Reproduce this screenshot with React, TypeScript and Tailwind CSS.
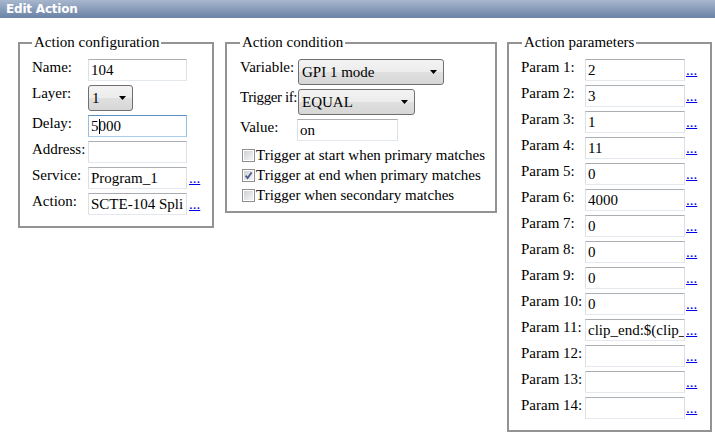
import React from "react";

function TextBox({ value, wide, focused }: { value?: string; wide?: boolean; focused?: boolean }) {
  const base =
    "h-[22px] shrink-0 overflow-hidden whitespace-nowrap border pl-[2px] leading-[20px]";
  const width = wide ? "w-[100px]" : "w-[99px]";
  const colors = focused
    ? "border-t-[#5a8fc0] border-x-[#95bde3] border-b-[#a9cdec]"
    : "border-t-[#abadb3] border-x-[#dbdfe6] border-b-[#e3e9ef]";
  return (
    <div className={`${base} ${width} ${colors}`}>
      {focused ? (
        <>
          5<span className="inline-block h-[15px] w-px -mr-px bg-black align-[-3px]" />000
        </>
      ) : (
        value
      )}
    </div>
  );
}

function Arrow() {
  return (
    <svg width="7" height="4" viewBox="0 0 7 4" className="shrink-0">
      <path d="M0 0H7L3.5 4Z" fill="#000" />
    </svg>
  );
}

function Select({ value, width }: { value: string; width: string }) {
  return (
    <div
      className={`flex h-[26px] shrink-0 items-center justify-between rounded-[3px] border border-[#707070] bg-[linear-gradient(#f3f3f3,#ececec_50%,#e0e0e0_50%,#d6d6d6)] pl-[3px] pr-[6px] leading-[17px] ${width}`}
    >
      <span className="whitespace-nowrap">{value}</span>
      <Arrow />
    </div>
  );
}

function Dots() {
  return (
    <span className="mb-[2px] ml-[2px] self-end leading-[17px] text-[#0000ee] underline">...</span>
  );
}

function Check({ checked }: { checked?: boolean }) {
  return (
    <span className="flex h-[13px] w-[13px] shrink-0 border border-[#8e8f8f] bg-white p-px">
      <span className="flex h-full w-full items-center justify-center bg-linear-to-br from-[#cfd1d4] to-[#f5f5f5]">
        {checked ? (
          <svg width="9" height="9" viewBox="0 0 9 9">
            <path d="M1.6 4.6L3.6 7L7.6 1.4" fill="none" stroke="#44598c" strokeWidth="1.7" />
          </svg>
        ) : null}
      </span>
    </span>
  );
}

function Row({
  label,
  labelW,
  children,
}: {
  label: string;
  labelW: string;
  children: React.ReactNode;
}) {
  return (
    <div className="flex items-start">
      <div className={`shrink-0 whitespace-nowrap leading-[17px] ${labelW}`}>{label}</div>
      {children}
    </div>
  );
}

export default function App() {
  const params = ["2", "3", "1", "11", "0", "4000", "0", "0", "0", "0", "clip_end:$(clip_", "", "", ""];
  return (
    <div className="h-[436px] w-[715px] overflow-hidden bg-white font-['Liberation_Serif',serif] text-[15px] text-black">
      <div className="h-[18px] bg-linear-to-b from-[#a8b7ce] to-[#6a82a5] pl-[6px] font-['DejaVu_Sans',sans-serif] text-[12px] font-bold leading-[18px] tracking-[-0.2px] text-white">
        Edit Action
      </div>
      <div className="flex items-start pl-[18px] pt-[16px]">
        {/* Action configuration */}
        <fieldset className="w-[196px] shrink-0 border-2 border-[#939393] px-0">
          <legend className="ml-[12px] px-[2px] leading-[17px]">Action configuration</legend>
          <div className="flex flex-col gap-[4px] pb-[11px] pl-[12px] pt-[8px]">
            <Row label="Name:" labelW="w-[56px]">
              <TextBox value="104" />
            </Row>
            <Row label="Layer:" labelW="w-[56px]">
              <Select value="1" width="w-[45px]" />
            </Row>
            <Row label="Delay:" labelW="w-[56px]">
              <TextBox focused />
            </Row>
            <Row label="Address:" labelW="w-[56px]">
              <TextBox value="" />
            </Row>
            <Row label="Service:" labelW="w-[56px]">
              <TextBox value="Program_1" />
              <Dots />
            </Row>
            <Row label="Action:" labelW="w-[56px]">
              <TextBox value="SCTE-104 Spli" />
              <Dots />
            </Row>
          </div>
        </fieldset>

        {/* Action condition */}
        <fieldset className="ml-[11px] w-[272px] shrink-0 border-2 border-[#939393] px-0">
          <legend className="ml-[13px] px-[2px] leading-[17px]">Action condition</legend>
          <div className="flex flex-col gap-[4px] pb-[6px] pl-[13px] pt-[8px]">
            <Row label="Variable:" labelW="w-[58px]">
              <Select value="GPI 1 mode" width="w-[146px]" />
            </Row>
            <div className="flex items-start">
              <div className="w-[58px] shrink-0 whitespace-nowrap leading-[17px] tracking-[-0.4px]">
                Trigger if:
              </div>
              <Select value="EQUAL" width="w-[117px]" />
            </div>
            <Row label="Value:" labelW="w-[57px]">
              <div className="h-[22px] w-[101px] shrink-0 overflow-hidden whitespace-nowrap border border-t-[#abadb3] border-x-[#dbdfe6] border-b-[#e3e9ef] pl-[2px] leading-[20px]">
                on
              </div>
            </Row>
            <div className="flex flex-col">
              <label className="flex h-[20px] items-center gap-px pl-[2px] leading-[17px]">
                <Check />
                <span className="whitespace-nowrap">Trigger at start when primary matches</span>
              </label>
              <label className="flex h-[20px] items-center gap-px pl-[2px] leading-[17px]">
                <Check checked />
                <span className="whitespace-nowrap">Trigger at end when primary matches</span>
              </label>
              <label className="flex h-[20px] items-center gap-px pl-[2px] leading-[17px]">
                <Check />
                <span className="whitespace-nowrap">Trigger when secondary matches</span>
              </label>
            </div>
          </div>
        </fieldset>

        {/* Action parameters */}
        <fieldset className="ml-[10px] w-[205px] shrink-0 border-2 border-[#939393] px-0">
          <legend className="ml-[13px] px-[2px] leading-[17px]">Action parameters</legend>
          <div className="flex flex-col gap-[4px] pb-[11px] pl-[12px] pt-[8px]">
            {params.map((p, i) => (
              <Row key={i} label={`Param ${i + 1}:`} labelW="w-[64px]">
                <TextBox value={p} wide />
                <span className="mb-[2px] ml-[1px] self-end leading-[17px] text-[#0000ee] underline">
                  ...
                </span>
              </Row>
            ))}
          </div>
        </fieldset>
      </div>
    </div>
  );
}
